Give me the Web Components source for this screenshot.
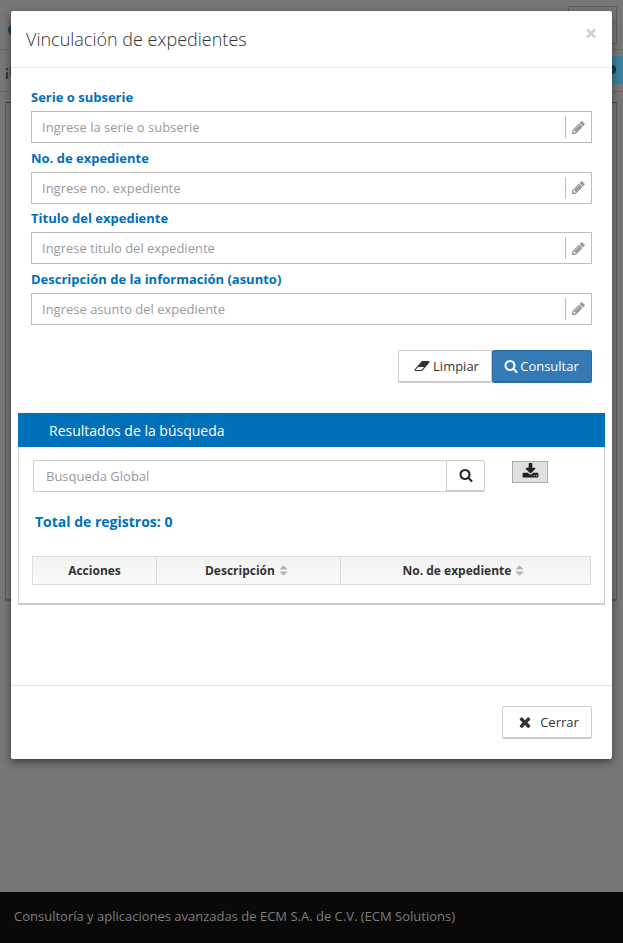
<!DOCTYPE html>
<html lang="es">
<head>
<meta charset="utf-8">
<title>Vinculación de expedientes</title>
<style>
    html, body {
        margin: 0;
        height: 943px;
        overflow: hidden;
        font-family: "Open Sans", "Liberation Sans", sans-serif;
    }
</style>
</head>
<body>
<ecm-page>
    <ecm-modal heading="Vinculación de expedientes">
        <ecm-field label="Serie o subserie" hint="Ingrese la serie o subserie"></ecm-field>
        <ecm-field label="No. de expediente" hint="Ingrese no. expediente"></ecm-field>
        <ecm-field label="Titulo del expediente" hint="Ingrese titulo del expediente"></ecm-field>
        <ecm-field label="Descripción de la información (asunto)" hint="Ingrese asunto del expediente"></ecm-field>
        <ecm-actions>
            <ecm-button icon="eraser" style="width:94px;padding-left:3px;gap:3px">Limpiar</ecm-button>
            <ecm-button icon="search" primary style="width:100px;gap:2px;padding-right:1px">Consultar</ecm-button>
        </ecm-actions>
        <ecm-results heading="Resultados de la búsqueda" slot="wide"></ecm-results>
        <ecm-button icon="remove" slot="footer" style="width:90px;padding-left:2px">Cerrar</ecm-button>
    </ecm-modal>
</ecm-page>

<script>
const ICONS = {
    search : {w : 1792, d : "M1216 832q0-185-131.500-316.500t-316.500-131.500-316.500 131.500-131.500 316.500 131.500 316.500 316.500 131.500 316.500-131.500 131.500-316.500zm512 832q0 52-38 90t-90 38q-54 0-90-38l-343-342q-179 124-399 124-143 0-273.500-55.500t-225-150-150-225-55.500-273.500 55.500-273.500 150-225 225-150 273.500-55.500 273.500 55.500 225 150 150 225 55.500 273.500q0 220-124 399l343 343q37 37 37 90z"},
    remove : {w : 1792, d : "M1490 1322q0 40-28 68l-136 136q-28 28-68 28t-68-28l-294-294-294 294q-28 28-68 28t-68-28l-136-136q-28-28-28-68t28-68l294-294-294-294q-28-28-28-68t28-68l136-136q28-28 68-28t68 28l294 294 294-294q28-28 68-28t68 28l136 136q28 28 28 68t-28 68l-294 294 294 294q28 28 28 68z"},
    pencil : {w : 1792, d : "M491 1536l91-91-235-235-91 91v107h128v128h107zm523-928q0-22-22-22-10 0-17 7l-542 542q-7 7-7 17 0 22 22 22 10 0 17-7l542-542q7-7 7-17zm-54-192l416 416-832 832h-416v-416zm683 96q0 53-37 90l-166 166-416-416 166-165q36-38 90-38 53 0 91 38l235 234q37 39 37 91z"},
    download : {w : 1792, d : "M1344 1344q0-26-19-45t-45-19-45 19-19 45 19 45 45 19 45-19 19-45zm256 0q0-26-19-45t-45-19-45 19-19 45 19 45 45 19 45-19 19-45zm128-224v320q0 40-28 68t-68 28h-1472q-40 0-68-28t-28-68v-320q0-40 28-68t68-28h465l135 136q58 56 136 56t136-56l136-136h464q40 0 68 28t28 68zm-325-569q17 41-14 70l-448 448q-18 19-45 19t-45-19l-448-448q-31-29-14-70 17-39 59-39h256v-448q0-26 19-45t45-19h256q26 0 45 19t19 45v448h256q42 0 59 39z"},
    eraser : {w : 2048, d : "M960 1408l336-384h-768l-336 384h768zm1013-1077q15 34 9.500 71.500t-30.500 65.500l-896 1024q-38 44-96 44h-768q-38 0-69.500-20.500t-47.500-54.500q-15-34-9.500-71.500t30.500-65.500l896-1024q38-44 96-44h768q38 0 70 20.500t47 54.500z"},
    sort : {w : 1792, d : "M1408 1088q0 26-19 45l-448 448q-19 19-45 19t-45-19l-448-448q-19-19-19-45t19-45 45-19h896q26 0 45 19t19 45zm0-384q0 26-19 45t-45 19h-896q-26 0-45-19t-19-45 19-45l448-448q19-19 45-19t45 19l448 448q19 19 19 45z"},
};

class EcmIcon extends HTMLElement {
    constructor() {
        super();
        this.attachShadow({mode : "open"});
    }
    connectedCallback() {
        const icon = ICONS[this.getAttribute("name")];
        this.shadowRoot.innerHTML = `
            <style>
                :host {
                    display: inline-flex;
                    line-height: 0;
                }
                svg {
                    height: 1em;
                    fill: currentColor;
                }
            </style>
            <svg viewBox="0 0 ${icon.w} 1792"><path d="${icon.d}"></path></svg>
        `;
    }
}
customElements.define("ecm-icon", EcmIcon);

// page behind the dark backdrop, only its edges can be seen
class EcmPage extends HTMLElement {
    constructor() {
        super();
        this.attachShadow({mode : "open"});
        this.shadowRoot.innerHTML = `
            <style>
                :host {
                    display: flex;
                    flex-direction: column;
                    height: 943px;
                    position: relative;
                    background: #777;
                    font-family: "Open Sans", "Liberation Sans", sans-serif;
                }
                .top {
                    height: 49px;
                    display: flex;
                    justify-content: space-between;
                    align-items: center;
                    border-bottom: 1px solid #6a6a6a;
                    padding: 0 6px 0 8px;
                }
                .logo {
                    width: 12px;
                    height: 12px;
                    margin-top: 10px;
                    border-radius: 50%;
                    background: #1d3f62;
                }
                .menu {
                    width: 49px;
                    height: 38px;
                    border: 1px solid #5f5f5f;
                    box-sizing: border-box;
                }
                .band {
                    height: 41px;
                    display: flex;
                    justify-content: space-between;
                    align-items: center;
                    border-bottom: 1px solid #6a6a6a;
                    color: #333;
                    font-size: 14px;
                    font-weight: 700;
                    padding-left: 5px;
                }
                .band i {
                    width: 11px;
                    height: 28px;
                    margin-top: -2px;
                    display: flex;
                    align-items: center;
                    background: #3b7f9e;
                }
                .band i::before {
                    content: "";
                    width: 4px;
                    height: 9px;
                    border-radius: 0 4px 4px 0;
                    background: #17384a;
                }
                .box {
                    height: 496px;
                    margin: 10px 6px 0 5px;
                    border: 1px solid #5f5f5f;
                    border-top-color: #2f4a5c;
                    border-bottom-width: 2px;
                }
                .spacer {
                    flex: 1;
                }
                footer {
                    height: 51px;
                    box-sizing: border-box;
                    display: flex;
                    align-items: center;
                    padding: 0 0 3px 14px;
                    background: #090909;
                    color: #7e7e7e;
                    font-size: 13px;
                }
                ::slotted(*) {
                    position: absolute;
                    left: 11px;
                    top: 11px;
                }
            </style>
            <div class="top"><span class="logo"></span><span class="menu"></span></div>
            <div class="band"><span>¡I</span><i></i></div>
            <div class="box"></div>
            <div class="spacer"></div>
            <footer>Consultoría y aplicaciones avanzadas de ECM S.A. de C.V. (ECM Solutions)</footer>
            <slot></slot>
        `;
    }
}
customElements.define("ecm-page", EcmPage);

class EcmModal extends HTMLElement {
    constructor() {
        super();
        this.attachShadow({mode : "open"});
        this.shadowRoot.innerHTML = `
            <style>
                :host {
                    display: flex;
                    flex-direction: column;
                    width: 601px;
                    height: 748px;
                    background: #fff;
                    border-radius: 2px;
                    box-shadow: 0 3px 9px rgba(0, 0, 0, .5);
                    color: #333;
                }
                header {
                    height: 56px;
                    display: flex;
                    justify-content: space-between;
                    border-bottom: 1px solid #e5e5e5;
                    padding: 0 15px;
                }
                h4 {
                    margin: 16px 0 0 0;
                    font-size: 18px;
                    line-height: 25px;
                    font-weight: 300;
                }
                button {
                    margin: 11px 0 0 0;
                    height: 22px;
                    padding: 0;
                    border: 0;
                    background: none;
                    font: 700 21px/21px "Open Sans", "Liberation Sans", sans-serif;
                    color: #cfcfcf;
                }
                .body {
                    display: flex;
                    flex-direction: column;
                    padding: 18.3px 20px 0;
                }
                .wide {
                    display: block;
                    margin: 30px 7px 0;
                }
                .spacer {
                    flex: 1;
                }
                footer {
                    height: 74px;
                    box-sizing: border-box;
                    display: flex;
                    justify-content: flex-end;
                    align-items: flex-start;
                    border-top: 1px solid #e5e5e5;
                    padding: 20px 20px 0;
                }
            </style>
            <header><h4></h4><button>×</button></header>
            <div class="body"><slot></slot></div>
            <div class="wide"><slot name="wide"></slot></div>
            <div class="spacer"></div>
            <footer><slot name="footer"></slot></footer>
        `;
        this.shadowRoot.querySelector("h4").textContent = this.getAttribute("heading");
    }
}
customElements.define("ecm-modal", EcmModal);

class EcmField extends HTMLElement {
    constructor() {
        super();
        this.attachShadow({mode : "open"});
        this.shadowRoot.innerHTML = `
            <style>
                :host {
                    display: flex;
                    flex-direction: column;
                    height: 60.5px;
                }
                label {
                    height: 24.8px;
                    font-size: 13px;
                    line-height: 22px;
                    font-weight: 700;
                    color: #0070ba;
                }
                .input {
                    height: 32px;
                    display: flex;
                    align-items: center;
                    box-sizing: border-box;
                    border: 1px solid #bdbdbd;
                    background: #fff;
                }
                .hint {
                    flex: 1;
                    padding-left: 10px;
                    font-size: 13px;
                    color: #9a9a9a;
                }
                .addon {
                    width: 25px;
                    height: 22px;
                    display: flex;
                    align-items: center;
                    justify-content: center;
                    border-left: 1px solid #bdbdbd;
                    color: #999;
                    font-size: 15px;
                }
            </style>
            <label></label>
            <div class="input">
                <span class="hint" role="textbox"></span>
                <span class="addon"><ecm-icon name="pencil"></ecm-icon></span>
            </div>
        `;
        this.shadowRoot.querySelector("label").textContent = this.getAttribute("label");
        this.shadowRoot.querySelector(".hint").textContent = this.getAttribute("hint");
    }
}
customElements.define("ecm-field", EcmField);

class EcmActions extends HTMLElement {
    constructor() {
        super();
        this.attachShadow({mode : "open"});
        this.shadowRoot.innerHTML = `
            <style>
                :host {
                    display: flex;
                    justify-content: flex-end;
                    margin-top: 21.5px;
                }
            </style>
            <slot></slot>
        `;
    }
}
customElements.define("ecm-actions", EcmActions);

class EcmButton extends HTMLElement {
    constructor() {
        super();
        this.attachShadow({mode : "open"});
        this.shadowRoot.innerHTML = `
            <style>
                :host {
                    display: flex;
                    align-items: center;
                    justify-content: center;
                    gap: 4px;
                    height: 33px;
                    box-sizing: border-box;
                    border: 1px solid #ccc;
                    border-bottom-width: 2px;
                    border-radius: 2px;
                    background: #fff;
                    color: #333;
                    font-size: 13px;
                }
                :host([primary]) {
                    background: #337ab7;
                    border-color: #2e6da4;
                    color: #fff;
                }
                ecm-icon {
                    font-size: 14px;
                }
                :host([icon="remove"]) {
                    gap: 7px;
                }
                :host([icon="remove"]) ecm-icon {
                    font-size: 16px;
                }
            </style>
            <ecm-icon name="${this.getAttribute("icon")}"></ecm-icon>
            <span><slot></slot></span>
        `;
    }
}
customElements.define("ecm-button", EcmButton);

class EcmResults extends HTMLElement {
    constructor() {
        super();
        this.attachShadow({mode : "open"});
        this.shadowRoot.innerHTML = `
            <style>
                :host {
                    display: block;
                    background: #fff;
                    border: solid #ccc;
                    border-width: 0 1px 2px 1px;
                }
                h5 {
                    margin: 0 -1px;
                    height: 34px;
                    padding-left: 31px;
                    background: #0070ba;
                    color: #fff;
                    font-size: 14px;
                    line-height: 35px;
                    font-weight: 400;
                }
                .tools {
                    display: flex;
                    margin: 13px 0 0 14px;
                }
                .search {
                    width: 413px;
                    height: 32px;
                    box-sizing: border-box;
                    display: flex;
                    align-items: center;
                    padding-left: 12px;
                    border: 1px solid #ccc;
                    border-right: 0;
                    border-radius: 2px 0 0 2px;
                    font-size: 13px;
                    color: #999;
                }
                .go {
                    width: 39px;
                    height: 32px;
                    box-sizing: border-box;
                    display: flex;
                    align-items: center;
                    justify-content: center;
                    border: 1px solid #ccc;
                    border-bottom-width: 2px;
                    border-radius: 0 2px 2px 0;
                    font-size: 14px;
                    color: #222;
                }
                .export {
                    width: 36px;
                    height: 22px;
                    box-sizing: border-box;
                    display: flex;
                    align-items: center;
                    justify-content: center;
                    margin: 1px 0 0 27px;
                    border: 1px solid #adadad;
                    background: #e0e0e0;
                    font-size: 17px;
                    color: #222;
                }
                .total {
                    margin: 20px 0 0 16px;
                    font-size: 14px;
                    line-height: 20px;
                    font-weight: 700;
                    color: #0070ba;
                }
                table {
                    width: 559px;
                    height: 29px;
                    margin: 24px 0 18px 13px;
                    border-collapse: collapse;
                    table-layout: fixed;
                    font-size: 12px;
                }
                th {
                    padding: 0;
                    border: 1px solid #ddd;
                    background: linear-gradient(#f2f2f2, #fafafa);
                    color: #333;
                    font-weight: 700;
                }
                th + th {
                    padding-right: 2px;
                }
                th ecm-icon {
                    margin-left: -1px;
                    vertical-align: -2px;
                    font-size: 13px;
                    color: #b5b5b5;
                }
            </style>
            <h5></h5>
            <div class="tools">
                <div class="search" role="textbox">Busqueda Global</div>
                <div class="go"><ecm-icon name="search"></ecm-icon></div>
                <div class="export"><ecm-icon name="download"></ecm-icon></div>
            </div>
            <div class="total">Total de registros: 0</div>
            <table>
                <colgroup><col style="width:124px"><col style="width:184px"><col></colgroup>
                <tr>
                    <th>Acciones</th>
                    <th>Descripción <ecm-icon name="sort"></ecm-icon></th>
                    <th>No. de expediente <ecm-icon name="sort"></ecm-icon></th>
                </tr>
            </table>
        `;
        this.shadowRoot.querySelector("h5").textContent = this.getAttribute("heading");
    }
}
customElements.define("ecm-results", EcmResults);
</script>
</body>
</html>
